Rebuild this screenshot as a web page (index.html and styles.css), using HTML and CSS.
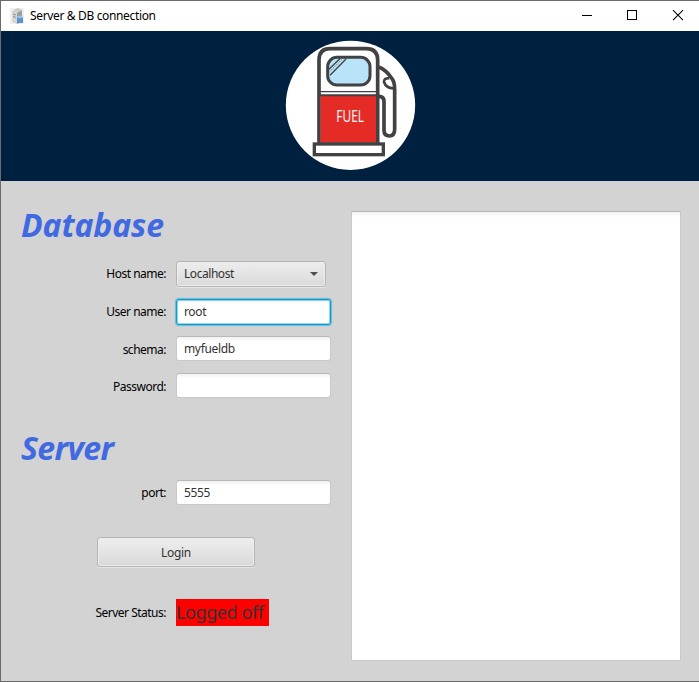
FILE: index.html
```html
<!DOCTYPE html>
<html lang="en">
<head>
<meta charset="utf-8">
<title>Server &amp; DB connection</title>
<link rel="stylesheet" href="styles.css">
</head>
<body>
<div class="window">
  <header class="titlebar">
    <svg class="app-icon" width="16" height="18" viewBox="0 0 16 18">
      <path fill="#f0f0f0" d="M0 1h14v16H0z"/>
      <path fill="#c9ccca" d="M2 4l6-3 4 2-5 3z"/>
      <path fill="#d3d6d4" d="M2 4l5 2v11l-5-2z"/>
      <path fill="#9a9f9c" d="M7 6l5-3v12l-5 2z"/>
      <path stroke="#8f9491" d="M3 7l3 1M3 9.500l3 1"/>
      <path fill="#5f91cb" d="M7 10h6v6H7z"/>
      <ellipse cx="10" cy="10" rx="3" ry="1.200" fill="#9bc3ea"/>
    </svg>
    <span class="title">Server &amp; DB connection</span>
    <svg class="controls" width="104" height="12" viewBox="0 0 104 12" fill="none" stroke="#000">
      <path d="M0 5.500h10M45.500 .5h9v9h-9z" shape-rendering="crispEdges"/>
      <path d="M91 .2l10 10M101 .2l-10 10" stroke-width="1.100"/>
    </svg>
  </header>
  <div class="banner">
    <svg width="140" height="145" viewBox="0 0 420 435">
      <circle cx="211.500" cy="214" r="194" fill="#fff"/>
      <g fill="none" stroke="#424244" stroke-width="11" stroke-linejoin="round">
        <path d="M297 99C312 105 326 119 336 134Q344 145 344 165V286Q344 306 328 306Q312 306 312 289V203Q312 187 297 187"/>
        <path d="M328 133Q312 131 312 144Q318 162 340 163" stroke-width="8"/>
        <path fill="#fff" d="M117 330V78Q117 44 151 44H258Q293 44 293 78V330z"/>
        <path fill="#e52b25" stroke="none" d="M122 186H288V325H122z"/>
        <path d="M117 173H293" stroke-width="4"/>
        <path d="M117 184H293" stroke-width="6"/>
        <rect x="143" y="70" width="127" height="83" rx="28" fill="#b9e3f9" stroke-width="9"/>
        <path d="M147 106L181 73M150 124L198 75" stroke-width="4"/>
        <path d="M149 113L187 75" stroke-width="2" stroke-dasharray="4 3"/>
        <rect x="103" y="330" width="207" height="32" fill="#fff" stroke-width="10" stroke-linejoin="miter"/>
      </g>
      <text x="169" y="264" textLength="83" lengthAdjust="spacingAndGlyphs" class="fuel">FUEL</text>
    </svg>
  </div>
  <main class="content">
    <form class="form">
      <h1 class="heading database">Database</h1>
      <div class="row host"><label>Host name:</label><div class="select"><span>Localhost</span><i class="arrow"></i></div></div>
      <div class="row user"><label>User name:</label><input class="field focused" value="root"></div>
      <div class="row"><label class="low">schema:</label><input class="field" value="myfueldb"></div>
      <div class="row"><label class="low">Password:</label><input class="field" value=""></div>
      <h1 class="heading server">Server</h1>
      <div class="row"><label>port:</label><input class="field" value="5555"></div>
      <button class="login" type="button">Login</button>
      <div class="row status-row"><label>Server Status:</label><span class="status">Logged off</span></div>
    </form>
    <div class="log"></div>
  </main>
</div>
</body>
</html>
```

FILE: styles.css
```css
* { box-sizing: border-box; }
body {
  margin: 0;
  font: 12px/16px "Noto Sans", "Open Sans", sans-serif;
  letter-spacing: -0.35px;
  color: #000;
}
.window {
  width: 699px;
  height: 682px;
  display: flex;
  flex-direction: column;
  border: 1px solid #6b6b6b;
  border-right: 0;
  background: #d3d3d3;
}
.titlebar {
  height: 30px;
  display: flex;
  align-items: center;
  padding: 0 13px 0 9px;
  background: #fff;
}
.app-icon { margin-right: 4px; }
.title { flex: 1; }
.controls { margin-top: -1px; }
.banner {
  height: 150px;
  padding: 3px 0 0 279px;
  background: #00203f;
}
.banner svg { display: block; }
.fuel { font: 500 47px "Open Sans", sans-serif; letter-spacing: 0; fill: #fff; }
.content { flex: 1; display: flex; }
.form { width: 350px; padding-top: 23px; }
.heading {
  margin: 0;
  padding-left: 20px;
  height: 42px;
  font: italic bold 32px/42px "Noto Sans", sans-serif;
  letter-spacing: -0.6px;
  color: #4169e1;
}
.database { letter-spacing: -0.1px; line-height: 41px; }
.row {
  display: flex;
  align-items: center;
  height: 25px;
  margin-bottom: 12px;
}
.row label {
  width: 165px;
  margin-right: 10px;
  text-align: right;
  letter-spacing: -0.5px;
}
.row .low { padding-top: 2px; }
.host { margin-top: 15px; height: 26px; }
.user { height: 26px; margin-bottom: 11px; }
.field {
  width: 155px;
  height: 25px;
  padding: 0 7px;
  border: 1px solid #c8c8c8;
  border-top-color: #b9b9b9;
  border-radius: 3px;
  outline: 0;
  background: linear-gradient(#f2f2f2, #fff 5px);
  color: #323232;
  font: inherit;
  letter-spacing: inherit;
}
.focused {
  height: 26px;
  border: 1px solid #039ed3;
  padding: 0 7px 1px;
  background: #fff;
  box-shadow: 0 0 1px 1px rgba(3, 158, 211, 0.5), inset 0 0 0 1px rgba(3, 158, 211, 0.4), inset 0 2px 3px #eee;
}
.select {
  width: 150px;
  height: 26px;
  display: flex;
  align-items: center;
  justify-content: space-between;
  padding: 0 7px;
  border: 1px solid #b5b5b5;
  border-radius: 3px;
  background: linear-gradient(#ededed, #dadada);
  box-shadow: inset 0 0 0 1px #ececec, 0 1px #e5e5e5;
  color: #323232;
}
.arrow { border: 4px solid transparent; border-top-color: #4d4d4d; border-bottom: 0; }
.select span { letter-spacing: -0.45px; }
.server { margin-top: 28px; margin-bottom: 12px; line-height: 43px; }
.login {
  display: block;
  width: 158px;
  height: 30px;
  margin: 32px 0 32px 96px;
  padding: 1px 0 0;
  border: 1px solid #b5b5b5;
  border-radius: 3px;
  background: linear-gradient(#eee, #d9d9d9);
  box-shadow: inset 0 0 0 1px #ececec, 0 1px #e5e5e5;
  color: #323232;
  font: inherit;
  letter-spacing: -0.3px;
}
.status-row { height: 27px; }
.status {
  width: 93px;
  height: 27px;
  background: #f00;
  color: #333;
  font-size: 18px;
  line-height: 27px;
  letter-spacing: -0.4px;
  white-space: nowrap;
}
.log {
  width: 330px;
  height: 450px;
  margin-top: 30px;
  border: 1px solid #c8c8c8;
  border-top-color: #b5b5b5;
  background: linear-gradient(#f2f2f2, #fff 5px);
}
```
